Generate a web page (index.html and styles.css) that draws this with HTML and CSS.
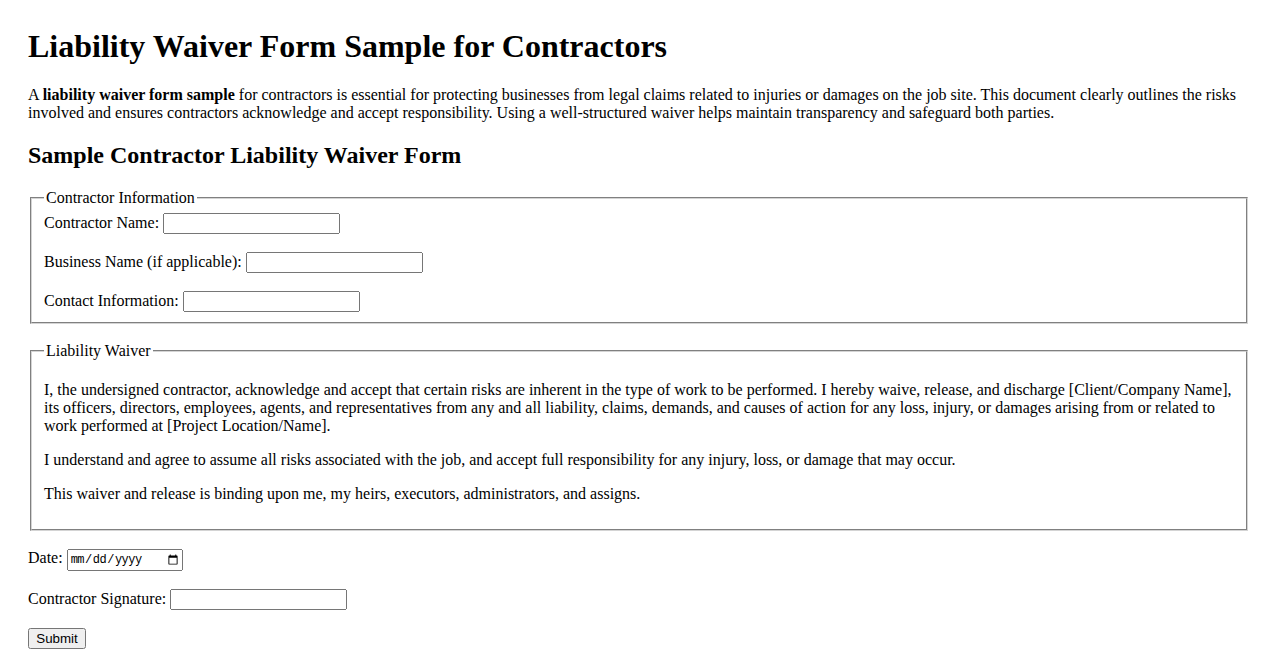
FILE: index.html
```html
<!DOCTYPE html>
<html lang="en">
<head>
<meta charset="utf-8">
<title>Liability Waiver Form Sample for Contractors</title>
<link rel="stylesheet" href="styles.css">
</head>
<body>
<div class="page">
<h1 class="title">Liability Waiver Form Sample for Contractors</h1>
<p class="intro">A <strong>liability waiver form sample</strong> for contractors is essential for protecting businesses from legal claims related to injuries or damages on the job site. This document clearly outlines the risks involved and ensures contractors acknowledge and accept responsibility. Using a well-structured waiver helps maintain transparency and safeguard both parties.</p>
<h2 class="subtitle">Sample Contractor Liability Waiver Form</h2>
<form class="waiver-form" onsubmit="return false;">
  <fieldset class="group">
    <legend class="group-legend">Contractor Information</legend>
    <label for="cname">Contractor Name:</label> <input type="text" id="cname" class="field"><br><br>
    <label for="bname">Business Name (if applicable):</label> <input type="text" id="bname" class="field"><br><br>
    <label for="contact">Contact Information:</label> <input type="text" id="contact" class="field">
  </fieldset>
  <br>
  <fieldset class="group">
    <legend class="group-legend">Liability Waiver</legend>
    <p class="waiver-text">I, the undersigned contractor, acknowledge and accept that certain risks are inherent in the type of work to be performed. I hereby waive, release, and discharge [Client/Company Name], its officers, directors, employees, agents, and representatives from any and all liability, claims, demands, and causes of action for any loss, injury, or damages arising from or related to work performed at [Project Location/Name].</p>
    <p class="waiver-text">I understand and agree to assume all risks associated with the job, and accept full responsibility for any injury, loss, or damage that may occur.</p>
    <p class="waiver-text">This waiver and release is binding upon me, my heirs, executors, administrators, and assigns.</p>
  </fieldset>
  <br>
  <label for="date">Date:</label> <input type="date" id="date" class="field date-field"><br><br>
  <label for="sig">Contractor Signature:</label> <input type="text" id="sig" class="field"><br><br>
  <button type="submit" class="submit">Submit</button>
</form>
</div>
</body>
</html>
```

FILE: styles.css
```css
body {
  margin: 8px;
  font-family: "Liberation Serif", "Times New Roman", serif;
  font-size: 16px;
  color: #000;
  background: #fff;
}
.page {
  padding: 0 20px 20px;
}
.title {
  font-size: 32px;
  margin: 20px 0 21.44px;
}
.intro {
  margin: 16px 0;
}
.subtitle {
  font-size: 24px;
  margin: 19.92px 0;
}
.group {
  margin: 0 2px;
  border: 2px groove #d4d4d4;
}
.group-legend {
  padding: 0 2px;
}
.field {
  font-family: Arial, "Liberation Sans", sans-serif;
  font-size: 13.33px;
  width: 177px;
  height: 21px;
  box-sizing: border-box;
}
.date-field {
  width: 116px;
  height: 22px;
  font-family: "Liberation Mono", "DejaVu Sans Mono", monospace;
  font-size: 12px;
  letter-spacing: -0.5px;
}
.submit {
  font-family: Arial, "Liberation Sans", sans-serif;
  font-size: 13.33px;
  width: 58px;
}
```
